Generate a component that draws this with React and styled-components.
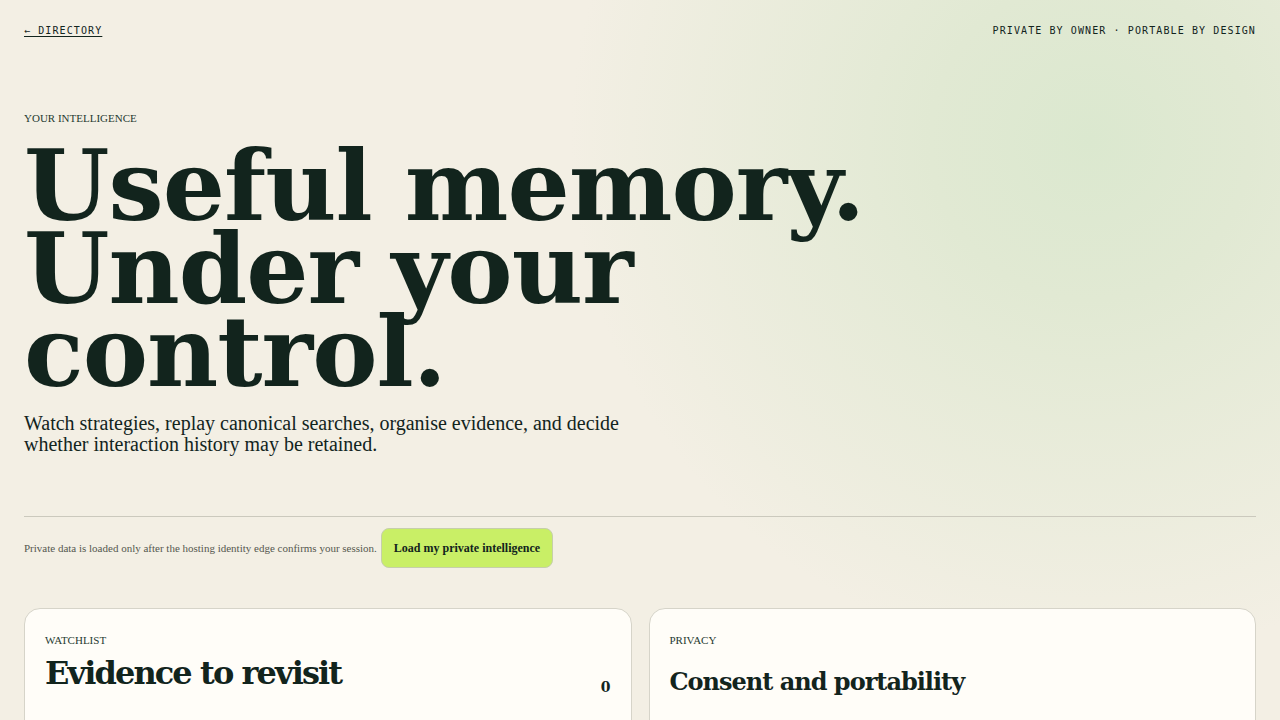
import React from 'react'
import styled, { createGlobalStyle } from 'styled-components'

const GlobalStyle = createGlobalStyle`
  html, body {
    margin: 0;
    padding: 0;
  }
  body {
    background: #f3efe4;
    font-family: "Liberation Serif", serif;
    color: #12241d;
  }
`

const Page = styled.div`
  min-height: 100vh;
  box-sizing: border-box;
  padding: 0 24px 40px;
  background:
    radial-gradient(circle at 1090px 140px, #dbe8cf 0px, #e1e9d3 160px, rgba(243, 239, 228, 0) 520px),
    #f3efe4;
`

const TopBar = styled.header`
  height: 60px;
  display: flex;
  align-items: center;
  justify-content: space-between;
  font-family: "DejaVu Sans Mono", monospace;
  font-size: 10px;
  letter-spacing: 1.1px;
  color: #12241d;
`

const BackLink = styled.a`
  color: inherit;
  text-decoration: underline;
  text-underline-offset: 2px;
`

const Eyebrow = styled.div`
  margin-top: 52px;
  font-size: 11px;
  color: #1f3a30;
  text-transform: uppercase;
`

const Headline = styled.h1`
  margin: 20px 0 0;
  font-family: "DejaVu Serif", Georgia, serif;
  font-weight: 700;
  font-size: 98px;
  line-height: 83px;
  letter-spacing: -1px;
  color: #12241d;
`

const Lede = styled.p`
  margin: 20px 0 0;
  max-width: 620px;
  font-size: 20px;
  line-height: 21px;
  color: #12241d;
`

const Rule = styled.hr`
  margin: 61px 0 0;
  border: 0;
  border-top: 1px solid #cbc9bd;
`

const SessionRow = styled.div`
  margin-top: 11px;
  display: flex;
  align-items: center;
  gap: 4px;
  font-size: 11px;
  color: #55584f;
`

const LoadButton = styled.button`
  height: 40px;
  padding: 0 12px;
  border: 1px solid #c6cfaa;
  border-radius: 8px;
  background: #c9ef66;
  font-family: "Liberation Serif", serif;
  font-weight: 700;
  font-size: 12px;
  color: #12241d;
  cursor: pointer;
`

const Cards = styled.div`
  margin-top: 40px;
  display: grid;
  grid-template-columns: 1fr 1fr;
  gap: 17px;
`

const Card = styled.section`
  min-height: 200px;
  box-sizing: border-box;
  padding: 25px 20px 20px;
  background: #fffdf8;
  border: 1px solid #d6d4c9;
  border-radius: 16px;
`

const CardLabel = styled.div`
  font-size: 11px;
  color: #1f3a30;
  text-transform: uppercase;
`

const CardHead = styled.div`
  display: flex;
  align-items: flex-end;
  justify-content: space-between;
`

const CardTitle = styled.h2`
  margin: ${p => (p.$small ? '22px 0 0' : '7px 0 0')};
  font-family: "DejaVu Serif", Georgia, serif;
  font-weight: 700;
  font-size: ${p => (p.$small ? '24px' : '32px')};
  line-height: ${p => (p.$small ? '28px' : '40px')};
  letter-spacing: ${p => (p.$small ? '-1px' : '-1.9px')};
  color: #12241d;
`

const Count = styled.span`
  margin-bottom: -2px;
  font-family: "DejaVu Serif", Georgia, serif;
  font-weight: 700;
  font-size: 14px;
  color: #12241d;
`

export default function App() {
  return (
    <>
      <GlobalStyle />
      <Page>
        <TopBar>
          <BackLink href="#">← DIRECTORY</BackLink>
          <span>PRIVATE BY OWNER · PORTABLE BY DESIGN</span>
        </TopBar>

        <Eyebrow>Your intelligence</Eyebrow>
        <Headline>
          Useful memory.
          <br />
          Under your
          <br />
          control.
        </Headline>
        <Lede>
          Watch strategies, replay canonical searches, organise evidence, and decide whether
          interaction history may be retained.
        </Lede>

        <Rule />
        <SessionRow>
          <span>Private data is loaded only after the hosting identity edge confirms your session.</span>
          <LoadButton type="button">Load my private intelligence</LoadButton>
        </SessionRow>

        <Cards>
          <Card>
            <CardLabel>Watchlist</CardLabel>
            <CardHead>
              <CardTitle>Evidence to revisit</CardTitle>
              <Count>0</Count>
            </CardHead>
          </Card>
          <Card>
            <CardLabel>Privacy</CardLabel>
            <CardTitle $small>Consent and portability</CardTitle>
          </Card>
        </Cards>
      </Page>
    </>
  )
}
